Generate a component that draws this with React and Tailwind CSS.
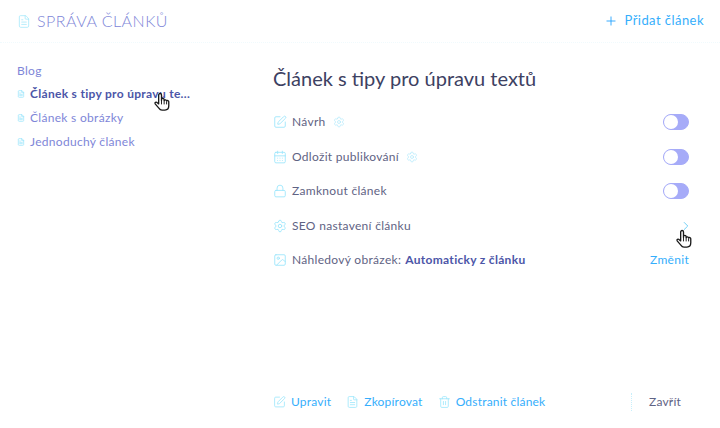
import React from "react";
import { FileText, Plus, SquarePen, Settings, CalendarDays, Lock, Image, Trash2, ChevronRight } from "lucide-react";

function HandCursor({ className }) {
  return (
    <svg viewBox="0 0 18 22" className={className}>
      <path
        d="M6 10V3a1.5 1.5 0 0 1 3 0v6l0-1a1.4 1.4 0 0 1 2.8 0v1a1.4 1.4 0 0 1 2.6.4a1.3 1.3 0 0 1 2.3.8v4.3c0 2.5-1.6 4.5-4 4.5H9.500c-1.500 0-2.500-.8-3.300-2L2.300 12.500c-.8-1.300.9-2.600 2-1.500L6 12.500z"
        fill="#fff"
        stroke="#1a1a1a"
        strokeWidth="1.400"
        strokeLinejoin="round"
      />
      <path d="M9 9v4M11.800 9v4M14.400 10v3" stroke="#1a1a1a" strokeWidth="1" />
    </svg>
  );
}

function Toggle() {
  return (
    <div className="w-[26px] h-4 rounded-full bg-[#a6abf8] border border-[#a6abf8] flex items-center">
      <div className="w-[14px] h-[14px] rounded-full bg-white" />
    </div>
  );
}

function SideLink({ children, active }) {
  return (
    <div className="h-6 flex items-center gap-[5px]">
      <FileText className="w-2 h-[10px] text-[#8fe3fb]" strokeWidth={2} />
      <span className={active ? "font-bold text-[#4c56a8]" : "text-[#7e86d8]"}>{children}</span>
    </div>
  );
}

function Row({ icon: Icon, children, right }) {
  return (
    <div className="h-[34.5px] flex items-center">
      <Icon className="w-[14px] h-[14px] text-[#9be6fb] mr-[5px]" strokeWidth={1.500} />
      <div className="flex-1 flex items-center text-[#5f6384]">{children}</div>
      {right}
    </div>
  );
}

function Hint() {
  return <Settings className="w-3 h-3 ml-[7px] text-[#b4e9fb]" strokeWidth={1.500} />;
}

function FootLink({ icon: Icon, children }) {
  return (
    <div className="flex items-center gap-[5px] text-[#35aefc]">
      <Icon className="w-[13px] h-[14px] text-[#9be6fb]" strokeWidth={1.500} />
      <span>{children}</span>
    </div>
  );
}

export default function App() {
  return (
    <div className="w-[720px] h-[428px] bg-white overflow-hidden flex flex-col text-[12px] font-['Lato',sans-serif] tracking-[0.3px]">
      {/* header */}
      <div className="h-[43px] shrink-0 flex items-center pl-[17px] pr-4 border-b border-dotted border-[#f0fafd]">
        <FileText className="w-[14px] h-[17px] text-[#9be6fb]" strokeWidth={1.200} />
        <h2 className="ml-[6px] text-[16px] font-light tracking-[0.5px] text-[#7e86d8]">SPRÁVA ČLÁNKŮ</h2>
        <div className="ml-auto flex items-center gap-[7px] text-[13px] tracking-[0.45px] text-[#35aefc]">
          <Plus className="w-[14px] h-[14px] text-[#1ea0ff]" strokeWidth={1.500} />
          <span>Přidat článek</span>
        </div>
      </div>

      <div className="flex-1 flex min-h-0">
        {/* sidebar */}
        <div className="w-[273px] shrink-0 pl-[17px] pt-[15px]">
          <div className="h-6 pt-[2px] flex items-center text-[#7e86d8]">Blog</div>
          <div className="relative">
            <SideLink active>Článek s tipy pro úpravu te...</SideLink>
            <HandCursor className="absolute left-[136px] top-[10px] w-[17px] h-[21px]" />
          </div>
          <SideLink>Článek s obrázky</SideLink>
          <SideLink>Jednoduchý článek</SideLink>
        </div>

        {/* main */}
        <div className="flex-1 flex flex-col pr-[31px]">
          <h1 className="mt-5 text-[20px] leading-[30px] tracking-normal text-[#3d4162]">Článek s tipy pro úpravu textů</h1>
          <div className="mt-[12px]">
            <Row icon={SquarePen} right={<Toggle />}>
              Návrh <Hint />
            </Row>
            <Row icon={CalendarDays} right={<Toggle />}>
              Odložit publikování <Hint />
            </Row>
            <Row icon={Lock} right={<Toggle />}>
              Zamknout článek
            </Row>
            <Row
              icon={Settings}
              right={
                <div className="relative mr-[-4px]">
                  <ChevronRight className="w-[14px] h-[14px] text-[#5cc8f5]" strokeWidth={1.500} />
                  <HandCursor className="absolute left-[-4px] top-[10px] w-[17px] h-[21px]" />
                </div>
              }
            >
              SEO nastavení článku
            </Row>
            <Row icon={Image} right={<span className="text-[#35aefc]">Změnit</span>}>
              <span>Náhledový obrázek:</span>
              <span className="ml-1 font-bold text-[#4c56a8]">Automaticky z článku</span>
            </Row>
          </div>

          <div className="mt-auto mb-[10px] h-8 flex items-center tracking-[0.2px]">
            <div className="flex items-center gap-[15px]">
              <FootLink icon={SquarePen}>Upravit</FootLink>
              <FootLink icon={FileText}>Zkopírovat</FootLink>
              <FootLink icon={Trash2}>Odstranit článek</FootLink>
            </div>
            <div className="ml-auto mr-[-9px] w-[67px] h-[18px] flex items-center justify-center text-[#5f6384] border-l border-dotted border-[#c8effb]">
              Zavřít
            </div>
          </div>
        </div>
      </div>
    </div>
  );
}
